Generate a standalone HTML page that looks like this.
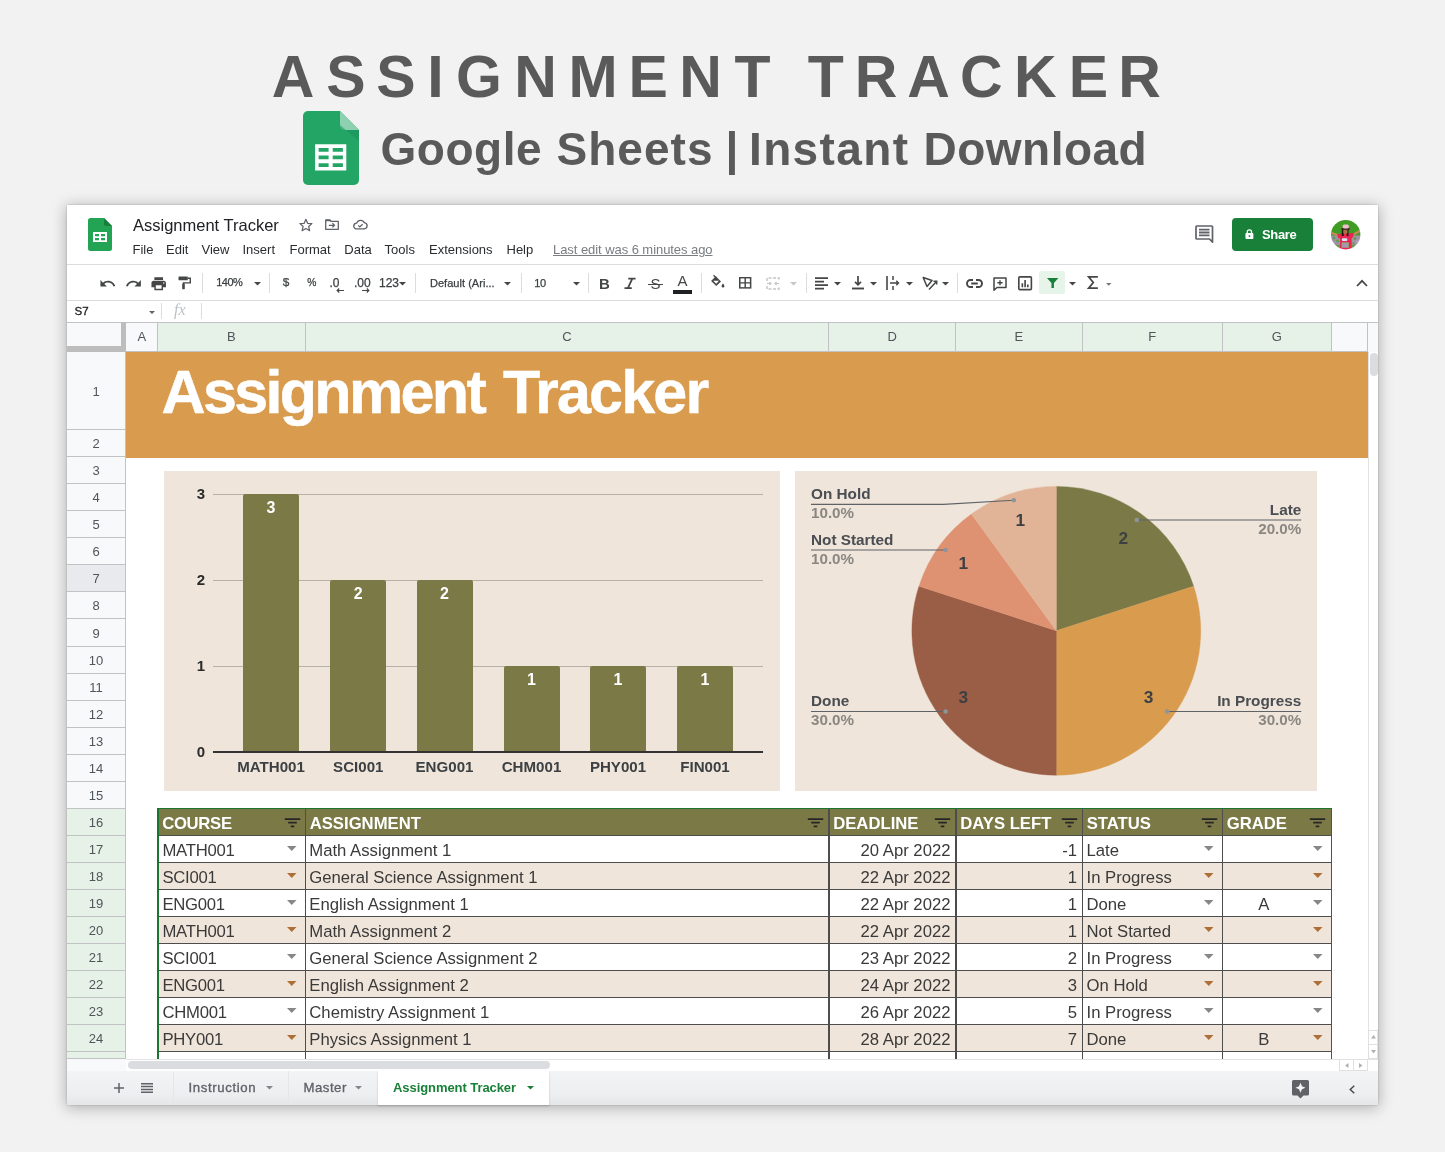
<!DOCTYPE html>
<html><head><meta charset="utf-8"><title>Assignment Tracker</title>
<style>
*{box-sizing:border-box;margin:0;padding:0}
html,body{width:1445px;height:1152px;overflow:hidden}
body{background:#f2f2f2;font-family:"Liberation Sans",sans-serif;position:relative;color:#202124}
#root{position:absolute;left:0;top:0;width:1445px;height:1152px;will-change:transform}
.a{position:absolute}
.t{position:absolute;white-space:nowrap;line-height:1}
#win{position:absolute;left:67px;top:205px;width:1311px;height:900px;background:#fff;box-shadow:0 2px 14px 1px rgba(0,0,0,.27),0 0 2px rgba(0,0,0,.22)}
.h1{top:48px;font-size:59px;font-weight:bold;color:#5a5a5a}
.h2{top:125.5px;font-size:46px;font-weight:bold;color:#5a5a5a}
.menu{top:243px;font-size:13px;color:#2a2d30}
.sep{position:absolute;width:1px;background:#dadce0}
.hl{position:absolute;height:1px;background:#dadce0}
.tb{position:absolute;top:276px;font-size:12px;color:#3c4043;-webkit-text-stroke:.25px #3c4043}
svg{position:absolute;overflow:visible}
</style></head>
<body>
<div id="root">
<div class="t h1" style="left:271.85px">A</div>
<div class="t h1" style="left:326.25px">S</div>
<div class="t h1" style="left:376.35px">S</div>
<div class="t h1" style="left:427.15px">I</div>
<div class="t h1" style="left:456.10px">G</div>
<div class="t h1" style="left:514.15px">N</div>
<div class="t h1" style="left:568.45px">M</div>
<div class="t h1" style="left:628.55px">E</div>
<div class="t h1" style="left:679.35px">N</div>
<div class="t h1" style="left:734.40px">T</div>
<div class="t h1" style="left:807.65px">T</div>
<div class="t h1" style="left:854.85px">R</div>
<div class="t h1" style="left:907.35px">A</div>
<div class="t h1" style="left:959.95px">C</div>
<div class="t h1" style="left:1014.05px">K</div>
<div class="t h1" style="left:1068.75px">E</div>
<div class="t h1" style="left:1118.25px">R</div>
<svg style="left:303px;top:111px" width="56" height="74" viewBox="0 0 56 74">
<path d="M5 0H37L56 19V69a5 5 0 0 1-5 5H5a5 5 0 0 1-5-5V5a5 5 0 0 1 5-5Z" fill="#23a566"/>
<path d="M37 0L56 19H42a5 5 0 0 1-5-5Z" fill="#8ed1b1"/>
<path d="M37 14a5 5 0 0 0 5 5H56V30Z" fill="#1c8f59" opacity=".55"/>
<path d="M12.100 33.300H43.300V59.400H12.100ZM15.600 36.900V40.700H25.600V36.900ZM29.700 36.900V40.700H39.900V36.900ZM15.600 44.600V48.300H25.600V44.600ZM29.700 44.600V48.300H39.900V44.600ZM15.600 52.200V56H25.600V52.200ZM29.700 52.200V56H39.900V52.200Z" fill="#fff" fill-rule="evenodd"/>
</svg>
<div class="t h2" style="left:380.6px;letter-spacing:0.5px">Google</div>
<div class="t h2" style="left:556.4px;letter-spacing:1.06px">Sheets</div>
<div class="t h2" style="left:725.5px;letter-spacing:0px">|</div>
<div class="t h2" style="left:749px;letter-spacing:1.37px">Instant</div>
<div class="t h2" style="left:923.6px;letter-spacing:0.47px">Download</div>
<div id="win"></div>
<svg style="left:88px;top:218px" width="24" height="33" viewBox="0 0 24 33">
<path d="M2.5 0H16L24 8V30.5a2.5 2.5 0 0 1-2.5 2.5H2.5A2.5 2.5 0 0 1 0 30.500V2.5A2.500 2.500 0 0 1 2.5 0Z" fill="#23a455"/>
<path d="M16 0L24 8H18a2 2 0 0 1-2-2Z" fill="#188038"/>
<path d="M5 14H19V24H5ZM7 16V18.200H11V16ZM13 16V18.200H17V16ZM7 20V22.200H11V20ZM13 20V22.200H17V20Z" fill="#fff" fill-rule="evenodd"/>
</svg>
<div class="t" style="left:133px;top:216.5px;font-size:16.5px;color:#202124">Assignment Tracker</div>
<svg style="left:298px;top:216.600px" width="15.800" height="15.800" viewBox="0 0 24 24"><path d="M12 3.500l2.600 6 6.500.600-4.900 4.300 1.500 6.400L12 17.400 6.300 20.800l1.500-6.400L2.900 10.100l6.500-.6z" fill="none" stroke="#5f6368" stroke-width="1.900" stroke-linejoin="round"/></svg>
<svg style="left:325.300px;top:219px" width="14" height="11" viewBox="0 0 14 11"><path d="M.7 .8H4.700L6 2.300H13.300V10.300H.7Z" fill="none" stroke="#5f6368" stroke-width="1.300" stroke-linejoin="round"/><path d="M.7 .8H4.700L6 2.300H.7Z" fill="#5f6368"/><path d="M3.800 6.300H9.400M7.400 4.200l2.100 2.100-2.100 2.100" fill="none" stroke="#5f6368" stroke-width="1.250"/></svg>
<svg style="left:352.700px;top:219.400px" width="15" height="10.800" viewBox="0 0 17 13" preserveAspectRatio="none"><path d="M4.500 12a3.500 3.500 0 0 1-.3-7A4.500 4.500 0 0 1 12.800 4.500 3.800 3.800 0 0 1 12.800 12Z" fill="none" stroke="#5f6368" stroke-width="1.500" stroke-linejoin="round"/><path d="M5.900 7.700l1.800 1.800 3.200-3.200" fill="none" stroke="#5f6368" stroke-width="1.500"/></svg>
<div class="t menu" style="left:132.5px">File</div>
<div class="t menu" style="left:166px">Edit</div>
<div class="t menu" style="left:201.5px">View</div>
<div class="t menu" style="left:242.5px">Insert</div>
<div class="t menu" style="left:289.5px">Format</div>
<div class="t menu" style="left:344.3px">Data</div>
<div class="t menu" style="left:384.6px">Tools</div>
<div class="t menu" style="left:429px">Extensions</div>
<div class="t menu" style="left:506.5px">Help</div>
<div class="t menu" style="left:553px;color:#7a7d81;text-decoration:underline;letter-spacing:-.06px">Last edit was 6 minutes ago</div>
<svg style="left:1194.500px;top:225px" width="20" height="19" viewBox="0 0 20 19"><path d="M1.800 1H16.700a.8.800 0 0 1 .8.800V17.200L14.500 14H1.800a.8.800 0 0 1-.8-.8V1.800a.8.800 0 0 1 .8-.8Z" fill="none" stroke="#5f6368" stroke-width="1.700" stroke-linejoin="round"/><path d="M4 4.600H14.500M4 7.500H14.500M4 10.400H14.500" stroke="#5f6368" stroke-width="1.900"/></svg>
<div class="a" style="left:1231.800px;top:218px;width:81.200px;height:33px;background:#188038;border-radius:4px"></div>
<svg style="left:1245px;top:229.200px" width="8.800" height="10.400" viewBox="0 0 10 13" preserveAspectRatio="none"><path d="M2.600 5V3.400a2.400 2.400 0 0 1 4.800 0V5" fill="none" stroke="#fff" stroke-width="1.500"/><rect x="0.500" y="5" width="9" height="7.500" rx="1" fill="#fff"/><circle cx="5" cy="8.800" r="1.100" fill="#188038"/></svg>
<div class="t" style="left:1262px;top:227.5px;font-size:13px;font-weight:bold;color:#fff;letter-spacing:-0.35px">Share</div>
<svg style="left:1331px;top:219.700px" width="29.400" height="29.400" viewBox="0 0 29.400 29.400"><defs><clipPath id="av"><circle cx="14.700" cy="14.700" r="14.700"/></clipPath><filter id="avb" x="-10%" y="-10%" width="120%" height="120%"><feGaussianBlur stdDeviation=".45"/></filter></defs><g clip-path="url(#av)"><g filter="url(#avb)"><rect x="-2" y="-2" width="34" height="34" fill="#3f9c22"/><rect x="-2" y="15.500" width="12" height="12" fill="#9a93a0"/><rect x="20.500" y="15.500" width="12" height="11" fill="#a096a8"/><circle cx="3" cy="18" r="1.300" fill="#5f9a3c"/><circle cx="6.500" cy="21" r="1.400" fill="#6a9a48"/><circle cx="2.500" cy="23" r="1.200" fill="#b9a3c8"/><circle cx="24" cy="18.500" r="1.300" fill="#62983f"/><circle cx="26.500" cy="22" r="1.400" fill="#b7a1c6"/><circle cx="22.500" cy="23.500" r="1.200" fill="#6a9a48"/><rect x="-2" y="25" width="34" height="8" fill="#6e9a4c"/><path d="M0.200 11.600L7.200 14.200 6.600 16.400 0 13.800Z" fill="#c58a5c"/><path d="M28.800 9.800L22 13.400 22.800 15.600 29.400 12Z" fill="#c58a5c"/><path d="M6.200 14.600L11 13.200H18.500L22.600 13 22 17.500 20.400 18 20.600 30H9L9.200 18.400 7.200 18Z" fill="#e8254f"/><rect x="10.800" y="9" width="1.900" height="7" fill="#1c1210"/><rect x="15.700" y="9" width="1.800" height="7" fill="#1c1210"/><rect x="12.300" y="9.200" width="4.200" height="4.600" rx="1.500" fill="#b06d48"/><rect x="10.200" y="8" width="8.700" height="1.900" rx=".9" fill="#4a2b28"/><rect x="11.600" y="4.500" width="6.300" height="3.900" rx="1.600" fill="#ecbfcb"/><rect x="10.900" y="18.200" width="5.400" height="2.800" rx="1" fill="#d4e6f2"/><rect x="10.600" y="22.400" width="7.200" height="5.400" fill="#8fae8c"/><rect x="11.500" y="24" width="4" height="3" fill="#b48cc0"/></g></g></svg>
<div class="hl" style="left:67px;width:1311px;top:264px"></div>
<svg style="left:98.500px;top:274.800px" width="17.300" height="17.300" viewBox="0 0 24 24"><path d="M12.500 8c-2.650 0-5.050.990-6.900 2.600L2 7v9h9l-3.620-3.620c1.390-1.160 3.160-1.880 5.120-1.880 3.540 0 6.550 2.310 7.600 5.500l2.370-.780C21.080 11.030 17.150 8 12.500 8z" fill="#444746"/></svg>
<svg style="left:124.800px;top:274.800px" width="17.300" height="17.300" viewBox="0 0 24 24"><path d="M18.400 10.600C16.550 8.990 14.150 8 11.500 8c-4.650 0-8.580 3.030-9.960 7.220L3.900 16c1.050-3.190 4.050-5.500 7.600-5.500 1.950 0 3.730.720 5.120 1.880L13 16h9V7l-3.600 3.600z" fill="#444746"/></svg>
<svg style="left:150.250px;top:274.800px" width="17.400" height="17.400" viewBox="0 0 24 24"><path d="M19 8H5c-1.660 0-3 1.340-3 3v6h4v4h12v-4h4v-6c0-1.660-1.340-3-3-3zm-3 11H8v-5h8v5zm3-7c-.550 0-1-.450-1-1s.450-1 1-1 1 .450 1 1-.450 1-1 1zm-1-9H6v4h12V3z" fill="#444746"/></svg>
<svg style="left:178.200px;top:276.300px" width="14" height="15" viewBox="0 0 14 15"><rect x="0.500" y="0.400" width="9.300" height="3.900" rx=".6" fill="#444746"/><path d="M9.800 2.300H12.300V6.900H5.500V8" fill="none" stroke="#444746" stroke-width="1.400"/><rect x="4.200" y="7.400" width="2.600" height="5.800" rx=".4" fill="#444746"/></svg>
<div class="sep" style="left:201.5px;top:273px;height:20px"></div>
<div class="sep" style="left:268.5px;top:273px;height:20px"></div>
<div class="sep" style="left:414.7px;top:273px;height:20px"></div>
<div class="sep" style="left:520.5px;top:273px;height:20px"></div>
<div class="sep" style="left:587.5px;top:273px;height:20px"></div>
<div class="sep" style="left:701px;top:273px;height:20px"></div>
<div class="sep" style="left:805.5px;top:273px;height:20px"></div>
<div class="sep" style="left:957px;top:273px;height:20px"></div>
<div class="t tb" style="left:216.300px;top:276.900px;font-size:11px;letter-spacing:-.55px;-webkit-text-stroke:.25px #3c4043">140%</div>
<svg style="left:254.0px;top:281.75px" width="7" height="3.5" viewBox="0 0 7 3.5"><path d="M0 0H7L3.5 3.5Z" fill="#444746"/></svg>
<div class="t tb" style="left:282.700px;top:277px;font-size:11.800px">$</div>
<div class="t tb" style="left:307.300px;top:278px;font-size:10.300px">%</div>
<div class="t tb" style="left:329.500px;top:277px;font-size:12px">.0</div>
<svg style="left:336px;top:288px" width="8" height="5" viewBox="0 0 8 5"><path d="M8 2.500H1.500M3.200 0.500L1.200 2.500l2 2" fill="none" stroke="#444746" stroke-width="1.200"/></svg>
<div class="t tb" style="left:354px;top:277px;font-size:12px">.00</div>
<svg style="left:362px;top:288px" width="8" height="5" viewBox="0 0 8 5"><path d="M0 2.500H6.500M4.800 0.500l2 2-2 2" fill="none" stroke="#444746" stroke-width="1.200"/></svg>
<div class="t tb" style="left:379px;top:277px">123</div>
<svg style="left:399.0px;top:282.25px" width="7" height="3.5" viewBox="0 0 7 3.5"><path d="M0 0H7L3.5 3.5Z" fill="#444746"/></svg>
<div class="t tb" style="left:430px;top:277.500px;font-size:11px;letter-spacing:.03px;-webkit-text-stroke:.25px #3c4043">Default (Ari...</div>
<svg style="left:504.0px;top:281.75px" width="7" height="3.5" viewBox="0 0 7 3.5"><path d="M0 0H7L3.5 3.5Z" fill="#444746"/></svg>
<div class="t tb" style="left:534.300px;top:277.500px;font-size:11px;letter-spacing:-.3px;-webkit-text-stroke:.25px #3c4043">10</div>
<svg style="left:573.0px;top:281.75px" width="7" height="3.5" viewBox="0 0 7 3.5"><path d="M0 0H7L3.5 3.5Z" fill="#444746"/></svg>
<div class="t" style="left:599px;top:275.500px;font-size:15px;font-weight:bold;color:#444746">B</div>
<svg style="left:623px;top:277px" width="14" height="13" viewBox="0 0 14 13"><path d="M5.300 1.700H12.600M1.500 11.100H8.800M9.300 1.700L4.900 11.100" fill="none" stroke="#444746" stroke-width="1.800"/></svg>
<div class="t" style="left:650.500px;top:275.500px;font-size:15px;color:#444746">S</div>
<div class="a" style="left:648px;top:283.500px;width:15px;height:1.500px;background:#444746"></div>
<div class="t" style="left:677.500px;top:272.700px;font-size:15px;color:#444746">A</div>
<div class="a" style="left:673px;top:290px;width:19px;height:3.500px;background:#202124"></div>
<svg style="left:710px;top:275px" width="15" height="14" viewBox="0 0 15 14"><path d="M5.800 1.200L11 6.400 6.300 11.100 1.100 5.900Z" fill="#444746"/><path d="M3.500 0.200L6.300 3" stroke="#444746" stroke-width="1.300" fill="none"/><path d="M3.200 5.800H9L6.200 8.700Z" fill="#fff"/><path d="M13 8.500c.9 1.300 1.400 2 1.400 2.700a1.400 1.400 0 0 1-2.800 0c0-.7.500-1.400 1.400-2.700Z" fill="#444746"/></svg>
<svg style="left:739px;top:277.200px" width="12.400" height="11.600" viewBox="0 0 13 13" preserveAspectRatio="none"><rect x=".8" y=".8" width="11.400" height="11.400" fill="none" stroke="#444746" stroke-width="1.600"/><path d="M6.500 1V12M1 6.500H12" stroke="#444746" stroke-width="1.500"/></svg>
<svg style="left:766px;top:276.500px" width="14" height="13" viewBox="0 0 14 13"><path d="M1 4V1H13V4M1 9V12H13V9" fill="none" stroke="#c4c7c5" stroke-width="1.500" stroke-dasharray="3 1.500"/><path d="M1 6.500H5M3.500 5L5 6.500 3.500 8M13 6.500H9M10.500 5L9 6.500 10.500 8" fill="none" stroke="#c4c7c5" stroke-width="1.200"/></svg>
<svg style="left:790.0px;top:281.75px" width="7" height="3.5" viewBox="0 0 7 3.5"><path d="M0 0H7L3.5 3.5Z" fill="#c4c7c5"/></svg>
<svg style="left:815px;top:277px" width="13" height="13" viewBox="0 0 13 13"><path d="M0 1H13M0 4.500H9M0 8H13M0 11.500H9" stroke="#444746" stroke-width="1.750"/></svg>
<svg style="left:834.0px;top:281.75px" width="7" height="3.5" viewBox="0 0 7 3.5"><path d="M0 0H7L3.5 3.5Z" fill="#444746"/></svg>
<svg style="left:852px;top:276px" width="12" height="14" viewBox="0 0 12 14"><path d="M6 0V8.500M3 5.800L6 8.800 9 5.800" fill="none" stroke="#444746" stroke-width="1.700"/><path d="M0 12.500H12" stroke="#444746" stroke-width="1.900"/></svg>
<svg style="left:869.5px;top:281.75px" width="7" height="3.5" viewBox="0 0 7 3.5"><path d="M0 0H7L3.5 3.5Z" fill="#444746"/></svg>
<svg style="left:886px;top:276px" width="14" height="14" viewBox="0 0 14 14"><path d="M1 0V14" stroke="#444746" stroke-width="1.600"/><path d="M7 0V4M7 10V14" stroke="#444746" stroke-width="1.500"/><path d="M4 7H12.500M10.300 4.800L12.500 7 10.300 9.200" fill="none" stroke="#444746" stroke-width="1.400"/></svg>
<svg style="left:905.5px;top:281.75px" width="7" height="3.5" viewBox="0 0 7 3.5"><path d="M0 0H7L3.5 3.5Z" fill="#444746"/></svg>
<svg style="left:922px;top:276px" width="16" height="14" viewBox="0 0 16 14"><path d="M1.200 1.500L10 4.500 5 10.500Z" fill="none" stroke="#444746" stroke-width="1.500" stroke-linejoin="round"/><path d="M7 13.500L14.500 5.500M11.500 5.200H14.700V8.400" fill="none" stroke="#444746" stroke-width="1.500"/></svg>
<svg style="left:941.5px;top:281.75px" width="7" height="3.5" viewBox="0 0 7 3.5"><path d="M0 0H7L3.5 3.5Z" fill="#444746"/></svg>
<svg style="left:965.500px;top:279px" width="17" height="9" viewBox="0 0 17 9"><path d="M7 1H4.500a3.500 3.500 0 0 0 0 7H7M10 1H12.500a3.500 3.500 0 0 1 0 7H10M5.200 4.500H11.800" fill="none" stroke="#444746" stroke-width="1.900"/></svg>
<svg style="left:992.500px;top:276.500px" width="14" height="14" viewBox="0 0 14 14"><path d="M1 1H13V10.500H4L1 13.300Z" fill="none" stroke="#444746" stroke-width="1.500" stroke-linejoin="round"/><path d="M7 3.200V8.300M4.400 5.750H9.600" stroke="#444746" stroke-width="1.400"/></svg>
<svg style="left:1018.300px;top:275.900px" width="14.200" height="14.400" viewBox="0 0 14 14" preserveAspectRatio="none"><rect x=".8" y=".8" width="12.400" height="12.400" rx="1" fill="none" stroke="#444746" stroke-width="1.600"/><path d="M4.300 11V7M7 11V4M9.700 11V8.300" stroke="#444746" stroke-width="1.600"/></svg>
<div class="a" style="left:1039px;top:271px;width:26px;height:23px;background:#e6f4ea;border-radius:2px"></div>
<svg style="left:1046.500px;top:278px" width="11.400" height="10.500" viewBox="0 0 12 13" preserveAspectRatio="none"><path d="M0 0H12L7.300 6.300V12.500H4.700V6.300Z" fill="#188038"/></svg>
<svg style="left:1068.5px;top:281.75px" width="7" height="3.5" viewBox="0 0 7 3.5"><path d="M0 0H7L3.5 3.5Z" fill="#444746"/></svg>
<svg style="left:1087px;top:276px" width="11" height="13" viewBox="0 0 11 13"><path d="M10 1.700V.9H1.600L6.300 6.500 1.600 12.100H10V11.300" fill="none" stroke="#444746" stroke-width="1.700" stroke-linejoin="miter"/></svg>
<svg style="left:1105.85px;top:282.5px" width="5.5" height="2.8" viewBox="0 0 5.5 2.8"><path d="M0 0H5.5L2.75 2.8Z" fill="#747775"/></svg>
<svg style="left:1356px;top:279px" width="12" height="8" viewBox="0 0 12 8"><path d="M1 7L6 1.800 11 7" fill="none" stroke="#444746" stroke-width="1.700"/></svg>
<div class="hl" style="left:67px;width:1311px;top:300px"></div>
<div class="t" style="left:74.500px;top:306px;font-size:11.500px;color:#202124;-webkit-text-stroke:.3px #202124">S7</div>
<svg style="left:149.0px;top:310.5px" width="6" height="3" viewBox="0 0 6 3"><path d="M0 0H6L3.0 3Z" fill="#5f6368"/></svg>
<div class="sep" style="left:161px;top:303px;height:16px"></div>
<div class="t" style="left:174px;top:302px;font-size:16px;font-style:italic;color:#bdc1c6;font-family:'Liberation Serif',serif">fx</div>
<div class="sep" style="left:201px;top:303px;height:16px"></div>
<div class="a" style="left:67px;top:322px;width:1311px;height:30px;background:#f8f9fa;border-top:1px solid #c0c2c4"></div>
<div class="a" style="left:67px;top:323px;width:54px;height:23px;background:#f8f9fa"></div>
<div class="a" style="left:120.500px;top:322px;width:5.500px;height:30px;background:#bdbdbd"></div>
<div class="a" style="left:67px;top:346px;width:59px;height:6px;background:#bdbdbd"></div>
<div class="a" style="left:126.5px;top:323px;width:31.5px;height:28px;background:#f8f9fa;border-right:1px solid #c0c2c4"></div>
<div class="t" style="left:126px;width:31.5px;text-align:center;top:330px;font-size:13px;color:#50555a">A</div>
<div class="a" style="left:158.0px;top:323px;width:147.89999999999998px;height:28px;background:#e6f1e8;border-right:1px solid #c0c2c4"></div>
<div class="t" style="left:157.5px;width:147.89999999999998px;text-align:center;top:330px;font-size:13px;color:#50555a">B</div>
<div class="a" style="left:305.9px;top:323px;width:523.3000000000001px;height:28px;background:#e6f1e8;border-right:1px solid #c0c2c4"></div>
<div class="t" style="left:305.4px;width:523.3000000000001px;text-align:center;top:330px;font-size:13px;color:#50555a">C</div>
<div class="a" style="left:829.2px;top:323px;width:126.89999999999998px;height:28px;background:#e6f1e8;border-right:1px solid #c0c2c4"></div>
<div class="t" style="left:828.7px;width:126.89999999999998px;text-align:center;top:330px;font-size:13px;color:#50555a">D</div>
<div class="a" style="left:956.1px;top:323px;width:126.60000000000002px;height:28px;background:#e6f1e8;border-right:1px solid #c0c2c4"></div>
<div class="t" style="left:955.6px;width:126.60000000000002px;text-align:center;top:330px;font-size:13px;color:#50555a">E</div>
<div class="a" style="left:1082.7px;top:323px;width:140.29999999999995px;height:28px;background:#e6f1e8;border-right:1px solid #c0c2c4"></div>
<div class="t" style="left:1082.2px;width:140.29999999999995px;text-align:center;top:330px;font-size:13px;color:#50555a">F</div>
<div class="a" style="left:1223.0px;top:323px;width:108.5px;height:28px;background:#e6f1e8;border-right:1px solid #c0c2c4"></div>
<div class="t" style="left:1222.5px;width:108.5px;text-align:center;top:330px;font-size:13px;color:#50555a">G</div>
<div class="a" style="left:1331.5px;top:323px;width:36.5px;height:28px;background:#f8f9fa;border-right:1px solid #c0c2c4"></div>
<div class="a" style="left:126px;top:351px;width:1242px;height:1px;background:#c0c2c4"></div>
<div class="a" style="left:67px;top:352px;width:59px;height:707px;background:#f8f9fa;border-right:1px solid #c0c2c4"></div>
<div class="a" style="left:67px;top:352px;width:58px;height:78.19999999999999px;background:#f8f9fa;border-bottom:1px solid #c0c2c4"></div>
<div class="t" style="left:67px;width:58px;text-align:center;top:384.6px;font-size:13px;color:#50555a">1</div>
<div class="a" style="left:67px;top:430.2px;width:58px;height:27.04000000000002px;background:#f8f9fa;border-bottom:1px solid #c0c2c4"></div>
<div class="t" style="left:67px;width:58px;text-align:center;top:437.22px;font-size:13px;color:#50555a">2</div>
<div class="a" style="left:67px;top:457.24px;width:58px;height:27.039999999999964px;background:#f8f9fa;border-bottom:1px solid #c0c2c4"></div>
<div class="t" style="left:67px;width:58px;text-align:center;top:464.26px;font-size:13px;color:#50555a">3</div>
<div class="a" style="left:67px;top:484.28px;width:58px;height:27.04000000000002px;background:#f8f9fa;border-bottom:1px solid #c0c2c4"></div>
<div class="t" style="left:67px;width:58px;text-align:center;top:491.29999999999995px;font-size:13px;color:#50555a">4</div>
<div class="a" style="left:67px;top:511.32px;width:58px;height:27.04000000000002px;background:#f8f9fa;border-bottom:1px solid #c0c2c4"></div>
<div class="t" style="left:67px;width:58px;text-align:center;top:518.34px;font-size:13px;color:#50555a">5</div>
<div class="a" style="left:67px;top:538.36px;width:58px;height:27.039999999999964px;background:#f8f9fa;border-bottom:1px solid #c0c2c4"></div>
<div class="t" style="left:67px;width:58px;text-align:center;top:545.38px;font-size:13px;color:#50555a">6</div>
<div class="a" style="left:67px;top:565.4px;width:58px;height:27.040000000000077px;background:#e8eaed;border-bottom:1px solid #c0c2c4"></div>
<div class="t" style="left:67px;width:58px;text-align:center;top:572.4200000000001px;font-size:13px;color:#50555a">7</div>
<div class="a" style="left:67px;top:592.44px;width:58px;height:27.039999999999964px;background:#f8f9fa;border-bottom:1px solid #c0c2c4"></div>
<div class="t" style="left:67px;width:58px;text-align:center;top:599.46px;font-size:13px;color:#50555a">8</div>
<div class="a" style="left:67px;top:619.48px;width:58px;height:27.039999999999964px;background:#f8f9fa;border-bottom:1px solid #c0c2c4"></div>
<div class="t" style="left:67px;width:58px;text-align:center;top:626.5px;font-size:13px;color:#50555a">9</div>
<div class="a" style="left:67px;top:646.52px;width:58px;height:27.039999999999964px;background:#f8f9fa;border-bottom:1px solid #c0c2c4"></div>
<div class="t" style="left:67px;width:58px;text-align:center;top:653.54px;font-size:13px;color:#50555a">10</div>
<div class="a" style="left:67px;top:673.56px;width:58px;height:27.040000000000077px;background:#f8f9fa;border-bottom:1px solid #c0c2c4"></div>
<div class="t" style="left:67px;width:58px;text-align:center;top:680.5799999999999px;font-size:13px;color:#50555a">11</div>
<div class="a" style="left:67px;top:700.6px;width:58px;height:27.039999999999964px;background:#f8f9fa;border-bottom:1px solid #c0c2c4"></div>
<div class="t" style="left:67px;width:58px;text-align:center;top:707.62px;font-size:13px;color:#50555a">12</div>
<div class="a" style="left:67px;top:727.64px;width:58px;height:27.039999999999964px;background:#f8f9fa;border-bottom:1px solid #c0c2c4"></div>
<div class="t" style="left:67px;width:58px;text-align:center;top:734.66px;font-size:13px;color:#50555a">13</div>
<div class="a" style="left:67px;top:754.68px;width:58px;height:27.040000000000077px;background:#f8f9fa;border-bottom:1px solid #c0c2c4"></div>
<div class="t" style="left:67px;width:58px;text-align:center;top:761.7px;font-size:13px;color:#50555a">14</div>
<div class="a" style="left:67px;top:781.72px;width:58px;height:27.039999999999964px;background:#f8f9fa;border-bottom:1px solid #c0c2c4"></div>
<div class="t" style="left:67px;width:58px;text-align:center;top:788.74px;font-size:13px;color:#50555a">15</div>
<div class="a" style="left:67px;top:808.76px;width:58px;height:27.039999999999964px;background:#e6f1e8;border-bottom:1px solid #c0c2c4"></div>
<div class="t" style="left:67px;width:58px;text-align:center;top:815.78px;font-size:13px;color:#50555a">16</div>
<div class="a" style="left:67px;top:835.8px;width:58px;height:27.040000000000077px;background:#e6f1e8;border-bottom:1px solid #c0c2c4"></div>
<div class="t" style="left:67px;width:58px;text-align:center;top:842.8199999999999px;font-size:13px;color:#50555a">17</div>
<div class="a" style="left:67px;top:862.84px;width:58px;height:27.039999999999964px;background:#e6f1e8;border-bottom:1px solid #c0c2c4"></div>
<div class="t" style="left:67px;width:58px;text-align:center;top:869.86px;font-size:13px;color:#50555a">18</div>
<div class="a" style="left:67px;top:889.88px;width:58px;height:27.039999999999964px;background:#e6f1e8;border-bottom:1px solid #c0c2c4"></div>
<div class="t" style="left:67px;width:58px;text-align:center;top:896.9px;font-size:13px;color:#50555a">19</div>
<div class="a" style="left:67px;top:916.92px;width:58px;height:27.040000000000077px;background:#e6f1e8;border-bottom:1px solid #c0c2c4"></div>
<div class="t" style="left:67px;width:58px;text-align:center;top:923.94px;font-size:13px;color:#50555a">20</div>
<div class="a" style="left:67px;top:943.96px;width:58px;height:27.039999999999964px;background:#e6f1e8;border-bottom:1px solid #c0c2c4"></div>
<div class="t" style="left:67px;width:58px;text-align:center;top:950.98px;font-size:13px;color:#50555a">21</div>
<div class="a" style="left:67px;top:971.0px;width:58px;height:27.039999999999964px;background:#e6f1e8;border-bottom:1px solid #c0c2c4"></div>
<div class="t" style="left:67px;width:58px;text-align:center;top:978.02px;font-size:13px;color:#50555a">22</div>
<div class="a" style="left:67px;top:998.04px;width:58px;height:27.039999999999964px;background:#e6f1e8;border-bottom:1px solid #c0c2c4"></div>
<div class="t" style="left:67px;width:58px;text-align:center;top:1005.06px;font-size:13px;color:#50555a">23</div>
<div class="a" style="left:67px;top:1025.08px;width:58px;height:27.039999999999964px;background:#e6f1e8;border-bottom:1px solid #c0c2c4"></div>
<div class="t" style="left:67px;width:58px;text-align:center;top:1032.1px;font-size:13px;color:#50555a">24</div>
<div class="a" style="left:67px;top:1052.12px;width:58px;height:6.880000000000109px;background:#e6f1e8;border-bottom:1px solid #c0c2c4"></div>
<div class="a" style="left:126px;top:352px;width:1242px;height:105.500px;background:#d99b4e"></div>
<div class="t" style="left:161.500px;top:361.700px;font-size:61px;font-weight:bold;color:#fff;-webkit-text-stroke:.5px #fff;letter-spacing:-2.650px">Assignment</div>
<div class="t" style="left:502.900px;top:361.700px;font-size:61px;font-weight:bold;color:#fff;-webkit-text-stroke:.5px #fff;letter-spacing:-1.800px">Tracker</div>
<div class="a" style="left:163.500px;top:470.500px;width:616px;height:320px;background:#efe5da"></div>
<div class="a" style="left:213px;top:493.5px;width:550px;height:1.200px;background:#b9b1a8"></div>
<div class="a" style="left:213px;top:579.8px;width:550px;height:1.200px;background:#b9b1a8"></div>
<div class="a" style="left:213px;top:665.5px;width:550px;height:1.200px;background:#b9b1a8"></div>
<div class="a" style="left:243px;top:494px;width:56px;height:258px;background:#7b7a47;border-radius:2px 2px 0 0"></div>
<div class="t" style="left:243px;width:56px;text-align:center;top:499.7px;font-size:16px;font-weight:bold;color:#fff">3</div>
<div class="t" style="left:213px;width:116px;text-align:center;top:759px;font-size:15.100px;font-weight:bold;color:#3c4043">MATH001</div>
<div class="a" style="left:330.3px;top:580.3px;width:56px;height:171.70000000000005px;background:#7b7a47;border-radius:2px 2px 0 0"></div>
<div class="t" style="left:330.3px;width:56px;text-align:center;top:586.0px;font-size:16px;font-weight:bold;color:#fff">2</div>
<div class="t" style="left:300.3px;width:116px;text-align:center;top:759px;font-size:15.100px;font-weight:bold;color:#3c4043">SCI001</div>
<div class="a" style="left:416.5px;top:580.3px;width:56px;height:171.70000000000005px;background:#7b7a47;border-radius:2px 2px 0 0"></div>
<div class="t" style="left:416.5px;width:56px;text-align:center;top:586.0px;font-size:16px;font-weight:bold;color:#fff">2</div>
<div class="t" style="left:386.5px;width:116px;text-align:center;top:759px;font-size:15.100px;font-weight:bold;color:#3c4043">ENG001</div>
<div class="a" style="left:503.5px;top:666px;width:56px;height:86px;background:#7b7a47;border-radius:2px 2px 0 0"></div>
<div class="t" style="left:503.5px;width:56px;text-align:center;top:671.7px;font-size:16px;font-weight:bold;color:#fff">1</div>
<div class="t" style="left:473.5px;width:116px;text-align:center;top:759px;font-size:15.100px;font-weight:bold;color:#3c4043">CHM001</div>
<div class="a" style="left:590px;top:666px;width:56px;height:86px;background:#7b7a47;border-radius:2px 2px 0 0"></div>
<div class="t" style="left:590px;width:56px;text-align:center;top:671.7px;font-size:16px;font-weight:bold;color:#fff">1</div>
<div class="t" style="left:560px;width:116px;text-align:center;top:759px;font-size:15.100px;font-weight:bold;color:#3c4043">PHY001</div>
<div class="a" style="left:677px;top:666px;width:56px;height:86px;background:#7b7a47;border-radius:2px 2px 0 0"></div>
<div class="t" style="left:677px;width:56px;text-align:center;top:671.7px;font-size:16px;font-weight:bold;color:#fff">1</div>
<div class="t" style="left:647px;width:116px;text-align:center;top:759px;font-size:15.100px;font-weight:bold;color:#3c4043">FIN001</div>
<div class="a" style="left:213px;top:751.400px;width:550px;height:1.600px;background:#333"></div>
<div class="t" style="left:180px;width:25px;text-align:right;top:485.5px;font-size:15px;font-weight:bold;color:#2b2b2b">3</div>
<div class="t" style="left:180px;width:25px;text-align:right;top:571.8px;font-size:15px;font-weight:bold;color:#2b2b2b">2</div>
<div class="t" style="left:180px;width:25px;text-align:right;top:657.5px;font-size:15px;font-weight:bold;color:#2b2b2b">1</div>
<div class="t" style="left:180px;width:25px;text-align:right;top:743.5px;font-size:15px;font-weight:bold;color:#2b2b2b">0</div>
<div class="a" style="left:795px;top:470.500px;width:522px;height:320px;background:#efe5da"></div>
<svg style="left:0;top:0" width="1445" height="1152" viewBox="0 0 1445 1152"><path d="M1056.3 630.8L1056.30 486.40A144.4 144.4 0 0 1 1193.63 586.18Z" fill="#7b7a47" stroke="#7b7a47" stroke-width=".4"/><path d="M1056.3 630.8L1193.63 586.18A144.4 144.4 0 0 1 1056.30 775.20Z" fill="#d99b4e" stroke="#d99b4e" stroke-width=".4"/><path d="M1056.3 630.8L1056.30 775.20A144.4 144.4 0 0 1 918.97 586.18Z" fill="#9a5d45" stroke="#9a5d45" stroke-width=".4"/><path d="M1056.3 630.8L918.97 586.18A144.4 144.4 0 0 1 971.42 513.98Z" fill="#de9272" stroke="#de9272" stroke-width=".4"/><path d="M1056.3 630.8L971.42 513.98A144.4 144.4 0 0 1 1056.30 486.40Z" fill="#e2b497" stroke="#e2b497" stroke-width=".4"/><path d="M811 504.300H943.500L1013.800 500.200" fill="none" stroke="#5f6368" stroke-width="1.150"/><path d="M811 550H945.600" fill="none" stroke="#5f6368" stroke-width="1.150"/><path d="M811 711.500H945.600" fill="none" stroke="#5f6368" stroke-width="1.150"/><path d="M1136.800 520H1301.300" fill="none" stroke="#5f6368" stroke-width="1.150"/><path d="M1167 711.500H1301.300" fill="none" stroke="#5f6368" stroke-width="1.150"/><circle cx="1013.8" cy="500.2" r="2.300" fill="#8f9499"/><circle cx="945.6" cy="550" r="2.300" fill="#8f9499"/><circle cx="945.6" cy="711.5" r="2.300" fill="#8f9499"/><circle cx="1136.8" cy="520" r="2.300" fill="#8f9499"/><circle cx="1167" cy="711.5" r="2.300" fill="#8f9499"/></svg>
<div class="t" style="left:811px;top:485.6px;font-size:15.300px;font-weight:bold;color:#4a4d52">On Hold</div>
<div class="t" style="left:811px;top:504.6px;font-size:15.200px;font-weight:bold;color:#8a8783">10.0%</div>
<div class="t" style="left:811px;top:531.9px;font-size:15.300px;font-weight:bold;color:#4a4d52">Not Started</div>
<div class="t" style="left:811px;top:550.9000000000001px;font-size:15.200px;font-weight:bold;color:#8a8783">10.0%</div>
<div class="t" style="left:811px;top:692.8px;font-size:15.300px;font-weight:bold;color:#4a4d52">Done</div>
<div class="t" style="left:811px;top:711.8000000000001px;font-size:15.200px;font-weight:bold;color:#8a8783">30.0%</div>
<div class="t" style="left:1101.3px;width:200px;text-align:right;top:501.50000000000006px;font-size:15.300px;font-weight:bold;color:#4a4d52">Late</div>
<div class="t" style="left:1101.3px;width:200px;text-align:right;top:520.5000000000001px;font-size:15.200px;font-weight:bold;color:#8a8783">20.0%</div>
<div class="t" style="left:1101.3px;width:200px;text-align:right;top:692.8px;font-size:15.300px;font-weight:bold;color:#4a4d52">In Progress</div>
<div class="t" style="left:1101.3px;width:200px;text-align:right;top:711.8000000000001px;font-size:15.200px;font-weight:bold;color:#8a8783">30.0%</div>
<div class="t" style="left:1000.3px;width:40px;text-align:center;top:512.2px;font-size:17.300px;font-weight:bold;color:#3c4043">1</div>
<div class="t" style="left:943.3px;width:40px;text-align:center;top:555.0px;font-size:17.300px;font-weight:bold;color:#3c4043">1</div>
<div class="t" style="left:943.3px;width:40px;text-align:center;top:688.7px;font-size:17.300px;font-weight:bold;color:#3c4043">3</div>
<div class="t" style="left:1103.3px;width:40px;text-align:center;top:529.9000000000001px;font-size:17.300px;font-weight:bold;color:#3c4043">2</div>
<div class="t" style="left:1128.6px;width:40px;text-align:center;top:688.7px;font-size:17.300px;font-weight:bold;color:#3c4043">3</div>
<div class="a" style="left:158px;top:808.26px;width:1173px;height:27.040px;background:#7b7a47"></div>
<div class="t" style="left:162.2px;top:815.56px;font-size:16.700px;letter-spacing:-0.3px;font-weight:bold;color:#fff">COURSE</div>
<svg style="left:284.5px;top:818.26px" width="15" height="9" viewBox="0 0 15 9"><path d="M-.2 1.100H15.200M3.200 4.700H11.800M5.700 8.300H9.300" stroke="#262626" stroke-width="1.750"/></svg>
<div class="t" style="left:309.7px;top:815.56px;font-size:16.700px;letter-spacing:0px;font-weight:bold;color:#fff">ASSIGNMENT</div>
<svg style="left:808.0px;top:818.26px" width="15" height="9" viewBox="0 0 15 9"><path d="M-.2 1.100H15.200M3.200 4.700H11.800M5.700 8.300H9.300" stroke="#262626" stroke-width="1.750"/></svg>
<div class="t" style="left:833.2px;top:815.56px;font-size:16.700px;letter-spacing:0px;font-weight:bold;color:#fff">DEADLINE</div>
<svg style="left:935.0px;top:818.26px" width="15" height="9" viewBox="0 0 15 9"><path d="M-.2 1.100H15.200M3.200 4.700H11.800M5.700 8.300H9.300" stroke="#262626" stroke-width="1.750"/></svg>
<div class="t" style="left:960.2px;top:815.56px;font-size:16.700px;letter-spacing:0px;font-weight:bold;color:#fff">DAYS LEFT</div>
<svg style="left:1061.5px;top:818.26px" width="15" height="9" viewBox="0 0 15 9"><path d="M-.2 1.100H15.200M3.200 4.700H11.800M5.700 8.300H9.300" stroke="#262626" stroke-width="1.750"/></svg>
<div class="t" style="left:1086.7px;top:815.56px;font-size:16.700px;letter-spacing:0px;font-weight:bold;color:#fff">STATUS</div>
<svg style="left:1201.5px;top:818.26px" width="15" height="9" viewBox="0 0 15 9"><path d="M-.2 1.100H15.200M3.200 4.700H11.800M5.700 8.300H9.300" stroke="#262626" stroke-width="1.750"/></svg>
<div class="t" style="left:1226.7px;top:815.56px;font-size:16.700px;letter-spacing:0px;font-weight:bold;color:#fff">GRADE</div>
<svg style="left:1310.0px;top:818.26px" width="15" height="9" viewBox="0 0 15 9"><path d="M-.2 1.100H15.200M3.200 4.700H11.800M5.700 8.300H9.300" stroke="#262626" stroke-width="1.750"/></svg>
<div class="t" style="left:162.5px;top:842.8px;font-size:16.700px;color:#3a3a3a;letter-spacing:-.28px">MATH001</div>
<div class="t" style="left:309.3px;top:842.8px;font-size:16.700px;color:#3a3a3a">Math Assignment 1</div>
<div class="t" style="left:829px;width:121.5px;text-align:right;top:842.8px;font-size:16.700px;color:#3a3a3a">20 Apr 2022</div>
<div class="t" style="left:956px;width:121.0px;text-align:right;top:842.8px;font-size:16.700px;color:#3a3a3a">-1</div>
<div class="t" style="left:1086.5px;top:842.8px;font-size:16.700px;color:#3a3a3a">Late</div>
<svg style="left:287.25px;top:846.1999999999999px" width="9.5" height="5" viewBox="0 0 9.5 5"><path d="M0 0H9.5L4.75 5Z" fill="#858789"/></svg>
<svg style="left:1204.25px;top:846.1999999999999px" width="9.5" height="5" viewBox="0 0 9.5 5"><path d="M0 0H9.5L4.75 5Z" fill="#858789"/></svg>
<svg style="left:1312.75px;top:846.1999999999999px" width="9.5" height="5" viewBox="0 0 9.5 5"><path d="M0 0H9.5L4.75 5Z" fill="#858789"/></svg>
<div class="a" style="left:158px;top:862.34px;width:1173px;height:27.040px;background:#f0e5da"></div>
<div class="t" style="left:162.5px;top:869.84px;font-size:16.700px;color:#3a3a3a;letter-spacing:-.28px">SCI001</div>
<div class="t" style="left:309.3px;top:869.84px;font-size:16.700px;color:#3a3a3a">General Science Assignment 1</div>
<div class="t" style="left:829px;width:121.5px;text-align:right;top:869.84px;font-size:16.700px;color:#3a3a3a">22 Apr 2022</div>
<div class="t" style="left:956px;width:121.0px;text-align:right;top:869.84px;font-size:16.700px;color:#3a3a3a">1</div>
<div class="t" style="left:1086.5px;top:869.84px;font-size:16.700px;color:#3a3a3a">In Progress</div>
<svg style="left:287.25px;top:873.24px" width="9.5" height="5" viewBox="0 0 9.5 5"><path d="M0 0H9.5L4.75 5Z" fill="#ad6f35"/></svg>
<svg style="left:1204.25px;top:873.24px" width="9.5" height="5" viewBox="0 0 9.5 5"><path d="M0 0H9.5L4.75 5Z" fill="#ad6f35"/></svg>
<svg style="left:1312.75px;top:873.24px" width="9.5" height="5" viewBox="0 0 9.5 5"><path d="M0 0H9.5L4.75 5Z" fill="#ad6f35"/></svg>
<div class="t" style="left:162.5px;top:896.88px;font-size:16.700px;color:#3a3a3a;letter-spacing:-.28px">ENG001</div>
<div class="t" style="left:309.3px;top:896.88px;font-size:16.700px;color:#3a3a3a">English Assignment 1</div>
<div class="t" style="left:829px;width:121.5px;text-align:right;top:896.88px;font-size:16.700px;color:#3a3a3a">22 Apr 2022</div>
<div class="t" style="left:956px;width:121.0px;text-align:right;top:896.88px;font-size:16.700px;color:#3a3a3a">1</div>
<div class="t" style="left:1086.5px;top:896.88px;font-size:16.700px;color:#3a3a3a">Done</div>
<div class="t" style="left:1222.5px;width:82.5px;text-align:center;top:896.88px;font-size:16.700px;color:#3a3a3a">A</div>
<svg style="left:287.25px;top:900.28px" width="9.5" height="5" viewBox="0 0 9.5 5"><path d="M0 0H9.5L4.75 5Z" fill="#858789"/></svg>
<svg style="left:1204.25px;top:900.28px" width="9.5" height="5" viewBox="0 0 9.5 5"><path d="M0 0H9.5L4.75 5Z" fill="#858789"/></svg>
<svg style="left:1312.75px;top:900.28px" width="9.5" height="5" viewBox="0 0 9.5 5"><path d="M0 0H9.5L4.75 5Z" fill="#858789"/></svg>
<div class="a" style="left:158px;top:916.42px;width:1173px;height:27.040px;background:#f0e5da"></div>
<div class="t" style="left:162.5px;top:923.92px;font-size:16.700px;color:#3a3a3a;letter-spacing:-.28px">MATH001</div>
<div class="t" style="left:309.3px;top:923.92px;font-size:16.700px;color:#3a3a3a">Math Assignment 2</div>
<div class="t" style="left:829px;width:121.5px;text-align:right;top:923.92px;font-size:16.700px;color:#3a3a3a">22 Apr 2022</div>
<div class="t" style="left:956px;width:121.0px;text-align:right;top:923.92px;font-size:16.700px;color:#3a3a3a">1</div>
<div class="t" style="left:1086.5px;top:923.92px;font-size:16.700px;color:#3a3a3a">Not Started</div>
<svg style="left:287.25px;top:927.3199999999999px" width="9.5" height="5" viewBox="0 0 9.5 5"><path d="M0 0H9.5L4.75 5Z" fill="#ad6f35"/></svg>
<svg style="left:1204.25px;top:927.3199999999999px" width="9.5" height="5" viewBox="0 0 9.5 5"><path d="M0 0H9.5L4.75 5Z" fill="#ad6f35"/></svg>
<svg style="left:1312.75px;top:927.3199999999999px" width="9.5" height="5" viewBox="0 0 9.5 5"><path d="M0 0H9.5L4.75 5Z" fill="#ad6f35"/></svg>
<div class="t" style="left:162.5px;top:950.96px;font-size:16.700px;color:#3a3a3a;letter-spacing:-.28px">SCI001</div>
<div class="t" style="left:309.3px;top:950.96px;font-size:16.700px;color:#3a3a3a">General Science Assignment 2</div>
<div class="t" style="left:829px;width:121.5px;text-align:right;top:950.96px;font-size:16.700px;color:#3a3a3a">23 Apr 2022</div>
<div class="t" style="left:956px;width:121.0px;text-align:right;top:950.96px;font-size:16.700px;color:#3a3a3a">2</div>
<div class="t" style="left:1086.5px;top:950.96px;font-size:16.700px;color:#3a3a3a">In Progress</div>
<svg style="left:287.25px;top:954.36px" width="9.5" height="5" viewBox="0 0 9.5 5"><path d="M0 0H9.5L4.75 5Z" fill="#858789"/></svg>
<svg style="left:1204.25px;top:954.36px" width="9.5" height="5" viewBox="0 0 9.5 5"><path d="M0 0H9.5L4.75 5Z" fill="#858789"/></svg>
<svg style="left:1312.75px;top:954.36px" width="9.5" height="5" viewBox="0 0 9.5 5"><path d="M0 0H9.5L4.75 5Z" fill="#858789"/></svg>
<div class="a" style="left:158px;top:970.5px;width:1173px;height:27.040px;background:#f0e5da"></div>
<div class="t" style="left:162.5px;top:978.0px;font-size:16.700px;color:#3a3a3a;letter-spacing:-.28px">ENG001</div>
<div class="t" style="left:309.3px;top:978.0px;font-size:16.700px;color:#3a3a3a">English Assignment 2</div>
<div class="t" style="left:829px;width:121.5px;text-align:right;top:978.0px;font-size:16.700px;color:#3a3a3a">24 Apr 2022</div>
<div class="t" style="left:956px;width:121.0px;text-align:right;top:978.0px;font-size:16.700px;color:#3a3a3a">3</div>
<div class="t" style="left:1086.5px;top:978.0px;font-size:16.700px;color:#3a3a3a">On Hold</div>
<svg style="left:287.25px;top:981.4px" width="9.5" height="5" viewBox="0 0 9.5 5"><path d="M0 0H9.5L4.75 5Z" fill="#ad6f35"/></svg>
<svg style="left:1204.25px;top:981.4px" width="9.5" height="5" viewBox="0 0 9.5 5"><path d="M0 0H9.5L4.75 5Z" fill="#ad6f35"/></svg>
<svg style="left:1312.75px;top:981.4px" width="9.5" height="5" viewBox="0 0 9.5 5"><path d="M0 0H9.5L4.75 5Z" fill="#ad6f35"/></svg>
<div class="t" style="left:162.5px;top:1005.04px;font-size:16.700px;color:#3a3a3a;letter-spacing:-.28px">CHM001</div>
<div class="t" style="left:309.3px;top:1005.04px;font-size:16.700px;color:#3a3a3a">Chemistry Assignment 1</div>
<div class="t" style="left:829px;width:121.5px;text-align:right;top:1005.04px;font-size:16.700px;color:#3a3a3a">26 Apr 2022</div>
<div class="t" style="left:956px;width:121.0px;text-align:right;top:1005.04px;font-size:16.700px;color:#3a3a3a">5</div>
<div class="t" style="left:1086.5px;top:1005.04px;font-size:16.700px;color:#3a3a3a">In Progress</div>
<svg style="left:287.25px;top:1008.4399999999999px" width="9.5" height="5" viewBox="0 0 9.5 5"><path d="M0 0H9.5L4.75 5Z" fill="#858789"/></svg>
<svg style="left:1204.25px;top:1008.4399999999999px" width="9.5" height="5" viewBox="0 0 9.5 5"><path d="M0 0H9.5L4.75 5Z" fill="#858789"/></svg>
<svg style="left:1312.75px;top:1008.4399999999999px" width="9.5" height="5" viewBox="0 0 9.5 5"><path d="M0 0H9.5L4.75 5Z" fill="#858789"/></svg>
<div class="a" style="left:158px;top:1024.58px;width:1173px;height:27.040px;background:#f0e5da"></div>
<div class="t" style="left:162.5px;top:1032.08px;font-size:16.700px;color:#3a3a3a;letter-spacing:-.28px">PHY001</div>
<div class="t" style="left:309.3px;top:1032.08px;font-size:16.700px;color:#3a3a3a">Physics Assignment 1</div>
<div class="t" style="left:829px;width:121.5px;text-align:right;top:1032.08px;font-size:16.700px;color:#3a3a3a">28 Apr 2022</div>
<div class="t" style="left:956px;width:121.0px;text-align:right;top:1032.08px;font-size:16.700px;color:#3a3a3a">7</div>
<div class="t" style="left:1086.5px;top:1032.08px;font-size:16.700px;color:#3a3a3a">Done</div>
<div class="t" style="left:1222.5px;width:82.5px;text-align:center;top:1032.08px;font-size:16.700px;color:#3a3a3a">B</div>
<svg style="left:287.25px;top:1035.48px" width="9.5" height="5" viewBox="0 0 9.5 5"><path d="M0 0H9.5L4.75 5Z" fill="#ad6f35"/></svg>
<svg style="left:1204.25px;top:1035.48px" width="9.5" height="5" viewBox="0 0 9.5 5"><path d="M0 0H9.5L4.75 5Z" fill="#ad6f35"/></svg>
<svg style="left:1312.75px;top:1035.48px" width="9.5" height="5" viewBox="0 0 9.5 5"><path d="M0 0H9.5L4.75 5Z" fill="#ad6f35"/></svg>
<div class="a" style="left:158px;top:834.5999999999999px;width:1173px;height:1.400px;background:#4d4d4d"></div>
<div class="a" style="left:158px;top:861.64px;width:1173px;height:1.400px;background:#4d4d4d"></div>
<div class="a" style="left:158px;top:888.68px;width:1173px;height:1.400px;background:#4d4d4d"></div>
<div class="a" style="left:158px;top:915.7199999999999px;width:1173px;height:1.400px;background:#4d4d4d"></div>
<div class="a" style="left:158px;top:942.76px;width:1173px;height:1.400px;background:#4d4d4d"></div>
<div class="a" style="left:158px;top:969.8px;width:1173px;height:1.400px;background:#4d4d4d"></div>
<div class="a" style="left:158px;top:996.8399999999999px;width:1173px;height:1.400px;background:#4d4d4d"></div>
<div class="a" style="left:158px;top:1023.8799999999999px;width:1173px;height:1.400px;background:#4d4d4d"></div>
<div class="a" style="left:158px;top:1050.9199999999998px;width:1173px;height:1.400px;background:#4d4d4d"></div>
<div class="a" style="left:304.8px;top:808px;width:1.500px;height:251px;background:#4d4d4d"></div>
<div class="a" style="left:828.3px;top:808px;width:1.500px;height:251px;background:#4d4d4d"></div>
<div class="a" style="left:955.3px;top:808px;width:1.500px;height:251px;background:#4d4d4d"></div>
<div class="a" style="left:1081.8px;top:808px;width:1.500px;height:251px;background:#4d4d4d"></div>
<div class="a" style="left:1221.8px;top:808px;width:1.500px;height:251px;background:#4d4d4d"></div>
<div class="a" style="left:157px;top:807.500px;width:1175px;height:1.500px;background:#1c7430"></div>
<div class="a" style="left:157px;top:807.500px;width:1.600px;height:251.500px;background:#1c7430"></div>
<div class="a" style="left:1330.500px;top:807.500px;width:1.600px;height:251.500px;background:#1c7430"></div>
<div class="a" style="left:1368px;top:352px;width:10px;height:707px;background:#fff;border-left:1px solid #e3e3e3"></div>
<div class="a" style="left:1369.500px;top:353px;width:8px;height:23px;background:#dadce0;border-radius:4px"></div>
<div class="a" style="left:1368px;top:1030px;width:10px;height:29px;border:1px solid #e0e0e0;background:#fff"></div>
<div class="a" style="left:1368px;top:1044px;width:10px;height:1px;background:#e0e0e0"></div>
<svg style="left:1370.500px;top:1035px" width="5" height="3.500" viewBox="0 0 5 3.500"><path d="M0 3.500H5L2.500 0Z" fill="#b0b0b0"/></svg>
<svg style="left:1370.500px;top:1050px" width="5" height="3.500" viewBox="0 0 5 3.500"><path d="M0 0H5L2.500 3.500Z" fill="#b0b0b0"/></svg>
<div class="a" style="left:67px;top:1059px;width:1311px;height:11.500px;background:#fff;border-top:1px solid #e3e3e3"></div>
<div class="a" style="left:67px;top:1059px;width:59px;height:11.500px;background:#f8f9fa"></div>
<div class="a" style="left:128px;top:1061px;width:422px;height:8px;background:#dadce0;border-radius:4px"></div>
<div class="a" style="left:1339px;top:1059px;width:29px;height:11.500px;border:1px solid #e0e0e0;background:#fff"></div>
<div class="a" style="left:1353px;top:1059px;width:1px;height:11.500px;background:#e0e0e0"></div>
<svg style="left:1344.500px;top:1062.500px" width="3.500" height="5" viewBox="0 0 3.500 5"><path d="M3.500 0V5L0 2.500Z" fill="#b0b0b0"/></svg>
<svg style="left:1358.500px;top:1062.500px" width="3.500" height="5" viewBox="0 0 3.500 5"><path d="M0 0V5L3.500 2.500Z" fill="#b0b0b0"/></svg>
<div class="a" style="left:67px;top:1070.500px;width:1311px;height:34.500px;background:linear-gradient(#f3f4f5,#eceeef 70%,#e4e6e8)"></div>
<div class="a" style="left:378px;top:1070.500px;width:171px;height:34px;background:#fff;box-shadow:0 1px 2px rgba(0,0,0,.18)"></div>
<div class="a" style="left:173px;top:1070.500px;width:1px;height:34px;background:#e4e6e8"></div>
<div class="a" style="left:288.2px;top:1070.500px;width:1px;height:34px;background:#e4e6e8"></div>
<svg style="left:113.500px;top:1082.500px" width="10" height="10" viewBox="0 0 10 10"><path d="M5 0V10M0 5H10" stroke="#5f6368" stroke-width="1.500"/></svg>
<svg style="left:141px;top:1082.500px" width="12" height="10" viewBox="0 0 12 10"><path d="M0 .8H12M0 3.600H12M0 6.400H12M0 9.200H12" stroke="#5f6368" stroke-width="1.500"/></svg>
<div class="t" style="left:188.500px;top:1081px;font-size:13.200px;color:#5f6368;-webkit-text-stroke:.35px #5f6368;letter-spacing:.62px">Instruction</div>
<svg style="left:266.0px;top:1086.25px" width="7" height="3.5" viewBox="0 0 7 3.5"><path d="M0 0H7L3.5 3.5Z" fill="#80868b"/></svg>
<div class="t" style="left:303.500px;top:1081px;font-size:13.200px;color:#5f6368;-webkit-text-stroke:.35px #5f6368;letter-spacing:.5px">Master</div>
<svg style="left:355.2px;top:1086.25px" width="7" height="3.5" viewBox="0 0 7 3.5"><path d="M0 0H7L3.5 3.5Z" fill="#80868b"/></svg>
<div class="t" style="left:393px;top:1081px;font-size:13px;font-weight:bold;letter-spacing:-.07px;color:#188038">Assignment Tracker</div>
<svg style="left:526.5px;top:1086.25px" width="7" height="3.5" viewBox="0 0 7 3.5"><path d="M0 0H7L3.5 3.5Z" fill="#188038"/></svg>
<svg style="left:1292px;top:1080px" width="17" height="19" viewBox="0 0 17 19"><path d="M1.500 0H15.500A1.500 1.500 0 0 1 17 1.500V14A1.500 1.500 0 0 1 15.500 15.500H11.500L8.500 18.500 5.500 15.500H1.500A1.500 1.500 0 0 1 0 14V1.500A1.500 1.500 0 0 1 1.500 0Z" fill="#5f6368"/><path d="M8.500 2.800L10 6.300 13.500 7.800 10 9.300 8.500 12.800 7 9.300 3.500 7.800 7 6.300Z" fill="#f1f3f4"/></svg>
<svg style="left:1349px;top:1084.500px" width="6" height="9" viewBox="0 0 6 9"><path d="M5.300 .7L1.200 4.500 5.300 8.300" fill="none" stroke="#444746" stroke-width="1.400"/></svg>
</div>
</body></html>
